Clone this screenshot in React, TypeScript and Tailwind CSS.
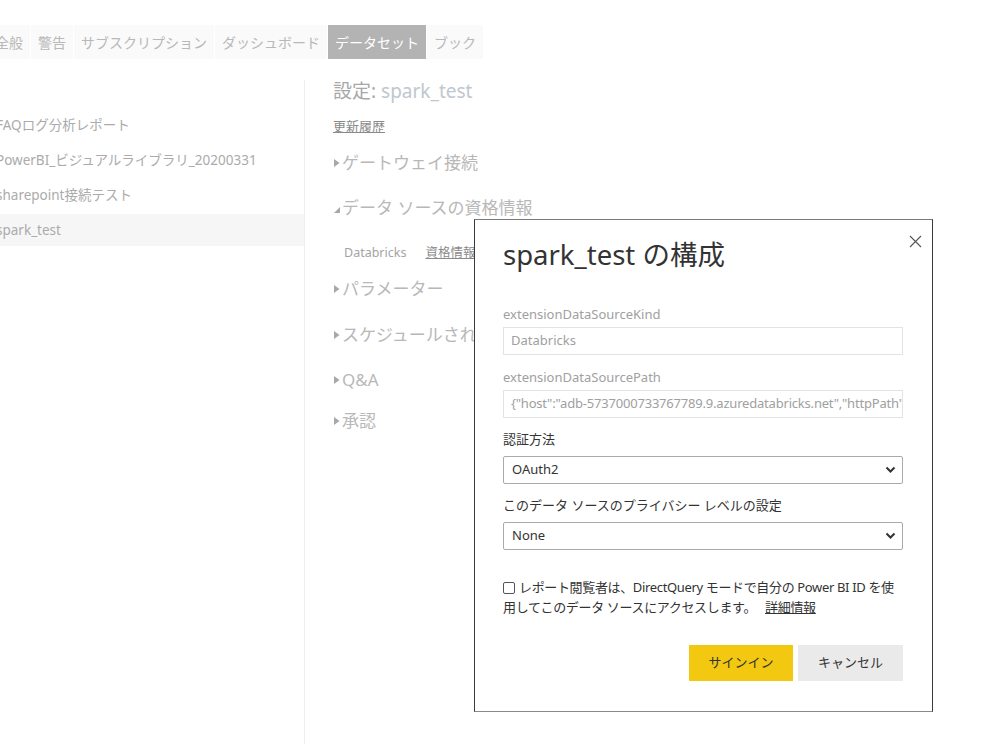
import React from "react";

const font = { fontFamily: '"Noto Sans", "Noto Sans CJK JP", sans-serif' };

function Tri({ open }: { open?: boolean }) {
  return open ? (
    <svg width="8" height="8" viewBox="0 0 8 8" className="mr-[1px] mt-[3px]">
      <path d="M7 1 L7 7 L1 7 Z" fill="#a8a8a8" />
    </svg>
  ) : (
    <svg width="8" height="10" viewBox="0 0 8 10" className="mr-[1px]">
      <path d="M1 1 L6.5 5 L1 9 Z" fill="#a8a8a8" />
    </svg>
  );
}

function Section({ label, open, mt }: { label: string; open?: boolean; mt: string }) {
  return (
    <div className={`flex items-center h-[24px] text-[17px] leading-[24px] text-[#b8b8b8] ${mt}`}>
      <Tri open={open} />
      <span className="whitespace-nowrap">{label}</span>
    </div>
  );
}

function Chevron() {
  return (
    <svg width="11" height="8" viewBox="0 0 11 8">
      <path d="M1.5 1.5 L5.5 5.5 L9.5 1.5" stroke="#333" strokeWidth="2" fill="none" />
    </svg>
  );
}

export default function App() {
  const tabs = ["全般", "警告", "サブスクリプション", "ダッシュボード", "データセット", "ブック"];
  const items = ["FAQログ分析レポート", "PowerBI_ビジュアルライブラリ_20200331", "sharepoint接続テスト", "spark_test"];
  return (
    <div className="relative w-[997px] h-[744px] bg-white overflow-hidden" style={font}>
      {/* tab bar */}
      <div className="flex pt-[25px] ml-[-12px] gap-[1px]">
        {tabs.map((t) => (
          <div
            key={t}
            className={`h-[34px] flex items-center px-[7px] text-[14px] whitespace-nowrap ${
              t === "データセット" ? "bg-[#b3b3b3] text-white" : "bg-[#fafafa] text-[#b8b8b8]"
            }`}
          >
            {t}
          </div>
        ))}
      </div>

      <div className="flex mt-[21px] h-[664px]">
        {/* left list */}
        <div className="w-[305px] shrink-0 border-r border-[#efefef] pt-[29px]">
          {items.map((it) => (
            <div
              key={it}
              className={`h-[32px] mb-[3px] flex items-center text-[13.5px] text-[#ababab] whitespace-nowrap ${
                it === "spark_test" ? "bg-[#f6f6f6]" : ""
              }`}
            >
              <span className="ml-[-4px]">{it}</span>
            </div>
          ))}
        </div>

        {/* main */}
        <div className="pl-[28px]">
          <div className="text-[19px] leading-[22px] whitespace-nowrap">
            <span className="text-[#a8a8a8]">設定: </span>
            <span className="text-[#c0c7ce]">spark_test</span>
          </div>
          <div className="mt-[15px] text-[13px] leading-[18px] text-[#8a8a8a] underline">更新履歴</div>
          <Section label="ゲートウェイ接続" mt="mt-[16px]" />
          <Section label="データ ソースの資格情報" open mt="mt-[21px]" />
          <div className="mt-[24px] ml-[11px] flex gap-[19px] text-[12.5px] leading-[18px] whitespace-nowrap">
            <span className="text-[#a4a4a4]">Databricks</span>
            <span className="text-[#8a8a8a] underline">資格情報を編集</span>
          </div>
          <Section label="パラメーター" mt="mt-[15px]" />
          <Section label="スケジュールされた更新" mt="mt-[22px]" />
          <Section label="Q&A" mt="mt-[21px]" />
          <Section label="承認" mt="mt-[17px]" />
        </div>
      </div>

      {/* dialog */}
      <div className="absolute left-[474px] top-[219px] w-[459px] h-[493px] bg-white border border-[#3a3a3a] border-t-[#7a7a7a] border-b-[#8a8a8a] px-[28px] pt-[17px]">
        <button className="absolute top-[13px] right-[9px] w-[16px] h-[16px] flex items-center justify-center">
          <svg width="13" height="13" viewBox="0 0 13 13">
            <path d="M1 1 L12 12 M12 1 L1 12" stroke="#555" strokeWidth="1.1" />
          </svg>
        </button>
        <div className="text-[27.5px] leading-[36px] text-[#333]">spark_test の構成</div>

        <div className="mt-[32px] text-[13px] leading-[18px] text-[#a0a0a0]">extensionDataSourceKind</div>
        <div className="mt-[4px] h-[28px] w-[400px] border border-[#e3e3e3] flex items-center px-[7px] text-[13px] text-[#a0a0a0]">
          Databricks
        </div>

        <div className="mt-[13px] text-[13px] leading-[18px] text-[#a0a0a0]">extensionDataSourcePath</div>
        <div className="mt-[4px] h-[28px] w-[400px] border border-[#e3e3e3] flex items-center px-[7px] text-[13px] tracking-[-0.2px] text-[#a0a0a0] overflow-hidden whitespace-nowrap">
          {'{"host":"adb-5737000733767789.9.azuredatabricks.net","httpPath":"sql/protocolv1/o/0/0000-000000-abcdef"}'}
        </div>

        <div className="mt-[12px] text-[13px] leading-[18px] text-[#333]">認証方法</div>
        <div className="mt-[8px] h-[28px] w-[400px] border border-[#aaaaaa] rounded-[2px] flex items-center justify-between pl-[8px] pr-[6px] text-[13px] text-[#333]">
          <span>OAuth2</span>
          <Chevron />
        </div>

        <div className="mt-[12px] text-[13px] leading-[18px] text-[#333] whitespace-nowrap">このデータ ソースのプライバシー レベルの設定</div>
        <div className="mt-[8px] h-[28px] w-[400px] border border-[#aaaaaa] rounded-[2px] flex items-center justify-between pl-[8px] pr-[6px] text-[13px] text-[#333]">
          <span>None</span>
          <Chevron />
        </div>

        <div className="mt-[27px] w-[402px] text-[13px] leading-[20px] tracking-[-0.35px] text-[#333]">
          <span className="inline-block w-[12px] h-[12px] border border-[#555] rounded-[2px] align-middle mr-[4px] mb-[2px]" />
          レポート閲覧者は、DirectQuery モードで自分の Power BI ID を使用してこのデータ ソースにアクセスします。 <span className="underline ml-[6px]">詳細情報</span>
        </div>

        <div className="mt-[28px] flex justify-end gap-[5px] w-[400px]">
          <button className="w-[104px] h-[36px] bg-[#f2c811] text-[13px] text-[#333]">サインイン</button>
          <button className="w-[105px] h-[36px] bg-[#eaeaea] text-[13px] text-[#333]">キャンセル</button>
        </div>
      </div>
    </div>
  );
}
